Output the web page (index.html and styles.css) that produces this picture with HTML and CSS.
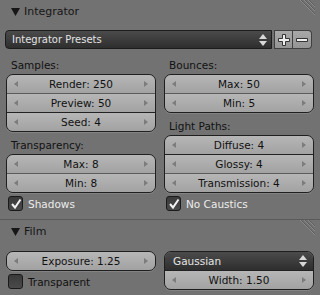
FILE: index.html
```html
<!DOCTYPE html>
<html lang="en">
<head>
    <meta charset="UTF-8">
    <title>Render Settings</title>
    <link rel="stylesheet" href="styles.css">
</head>
<body>
    <div class="panel">
        <div class="panel-head">
            <svg class="tri" width="9" height="8" viewBox="0 0 9 8"><polygon points="0,0 9,0 4.5,8" fill="#161616"/></svg>
            <span>Integrator</span>
            <svg class="grip" width="18" height="16" viewBox="0 0 18 16">
                <line x1="2" y1="0" x2="17" y2="15" stroke="#8a8a8a"/>
                <line x1="3" y1="0" x2="17" y2="14" stroke="#5e5e5e"/>
                <line x1="6" y1="0" x2="17" y2="11" stroke="#8a8a8a"/>
                <line x1="7" y1="0" x2="17" y2="10" stroke="#5e5e5e"/>
                <line x1="10" y1="0" x2="17" y2="7" stroke="#8a8a8a"/>
                <line x1="11" y1="0" x2="17" y2="6" stroke="#5e5e5e"/>
            </svg>
        </div>

        <div class="preset-row">
            <div class="menu">
                <span class="menu-text">Integrator Presets</span>
                <svg class="updown" width="8" height="12" viewBox="0 0 8 12"><polygon points="4,0 8,5 0,5" fill="#d8d8d8"/><polygon points="0,7 8,7 4,12" fill="#d8d8d8"/></svg>
            </div>
            <div class="tools">
                <div class="tool">
                    <svg width="12" height="12" viewBox="0 0 12 12"><path d="M4.5 0.5h3v4h4v3h-4v4h-3v-4h-4v-3h4z" fill="#eeeeee" stroke="#333"/></svg>
                </div>
                <div class="tool">
                    <svg width="12" height="12" viewBox="0 0 12 12"><path d="M0.5 4.5h11v3h-11z" fill="#eeeeee" stroke="#333"/></svg>
                </div>
            </div>
        </div>

        <div class="cols">
            <div class="col">
                <div class="lbl">Samples:</div>
                <div class="group">
                    <div class="num"><i class="la"></i><span>Render: 250</span><i class="ra"></i></div>
                    <div class="num"><i class="la"></i><span>Preview: 50</span><i class="ra"></i></div>
                    <div class="num dark-sep"><i class="la"></i><span>Seed: 4</span><i class="ra"></i></div>
                </div>
                <div class="lbl">Transparency:</div>
                <div class="group">
                    <div class="num"><i class="la"></i><span>Max: 8</span><i class="ra"></i></div>
                    <div class="num"><i class="la"></i><span>Min: 8</span><i class="ra"></i></div>
                </div>
                <div class="check on">
                    <span class="box"><svg width="12" height="12" viewBox="0 0 12 12"><polyline points="2,6 5,9.5 10.5,1.5" fill="none" stroke="#f2f2f2" stroke-width="2"/></svg></span>
                    <span>Shadows</span>
                </div>
            </div>
            <div class="col">
                <div class="lbl">Bounces:</div>
                <div class="group">
                    <div class="num"><i class="la"></i><span>Max: 50</span><i class="ra"></i></div>
                    <div class="num"><i class="la"></i><span>Min: 5</span><i class="ra"></i></div>
                </div>
                <div class="lbl">Light Paths:</div>
                <div class="group">
                    <div class="num"><i class="la"></i><span>Diffuse: 4</span><i class="ra"></i></div>
                    <div class="num dark-sep"><i class="la"></i><span>Glossy: 4</span><i class="ra"></i></div>
                    <div class="num"><i class="la"></i><span>Transmission: 4</span><i class="ra"></i></div>
                </div>
                <div class="check on">
                    <span class="box"><svg width="12" height="12" viewBox="0 0 12 12"><polyline points="2,6 5,9.5 10.5,1.5" fill="none" stroke="#f2f2f2" stroke-width="2"/></svg></span>
                    <span>No Caustics</span>
                </div>
            </div>
        </div>
    </div>

    <div class="panel film">
        <div class="panel-head">
            <svg class="tri" width="9" height="8" viewBox="0 0 9 8"><polygon points="0,0 9,0 4.5,8" fill="#161616"/></svg>
            <span>Film</span>
            <svg class="grip" width="18" height="16" viewBox="0 0 18 16">
                <line x1="2" y1="0" x2="17" y2="15" stroke="#8a8a8a"/>
                <line x1="3" y1="0" x2="17" y2="14" stroke="#5e5e5e"/>
                <line x1="6" y1="0" x2="17" y2="11" stroke="#8a8a8a"/>
                <line x1="7" y1="0" x2="17" y2="10" stroke="#5e5e5e"/>
                <line x1="10" y1="0" x2="17" y2="7" stroke="#8a8a8a"/>
                <line x1="11" y1="0" x2="17" y2="6" stroke="#5e5e5e"/>
            </svg>
        </div>
        <div class="cols film-cols">
            <div class="col">
                <div class="group">
                    <div class="num"><i class="la"></i><span>Exposure: 1.25</span><i class="ra"></i></div>
                </div>
                <div class="check">
                    <span class="box"></span>
                    <span>Transparent</span>
                </div>
            </div>
            <div class="col">
                <div class="group">
                    <div class="menu in-group">
                        <span class="menu-text">Gaussian</span>
                        <svg class="updown" width="8" height="12" viewBox="0 0 8 12"><polygon points="4,0 8,5 0,5" fill="#d8d8d8"/><polygon points="0,7 8,7 4,12" fill="#d8d8d8"/></svg>
                    </div>
                    <div class="num"><i class="la"></i><span>Width: 1.50</span><i class="ra"></i></div>
                </div>
            </div>
        </div>
    </div>
</body>
</html>
```

FILE: styles.css
```css
body{
    margin: 0;
    background: #727272;
    font: 10px "DejaVu Sans", sans-serif;
    color: #111;
    width: 320px;
    height: 295px;
    overflow: hidden;
}
.panel{
    padding: 0 6px 0 6px;
    height: 219px;
}
.panel.film{
    border-top: 1px solid #5a5a5a;
    height: 75px;
}
.panel-head{
    display: flex;
    align-items: center;
    height: 22px;
    font-size: 11px;
    color: #161616;
}
.tri{
    margin: 1px 4px 0 5px;
}
.grip{
    margin-left: auto;
    align-self: flex-start;
    margin-right: -2px;
}
.preset-row{
    display: flex;
    margin: 8px 2px 0 -1px;
    height: 19px;
}
.menu{
    flex: 1;
    display: flex;
    align-items: center;
    padding: 0 4px 0 6px;
    background: linear-gradient(#4b4b4b, #2e2e2e);
    border: 1px solid #1c1c1c;
    border-radius: 4px 0 0 4px;
    color: #e4e4e4;
    font-size: 10px;
}
.menu-text{
    flex: 1;
}
.tools{
    display: flex;
    margin-left: 2px;
}
.tool{
    width: 17px;
    display: flex;
    align-items: center;
    justify-content: center;
    background: linear-gradient(#a8a8a8, #949494);
    border: 1px solid #404040;
    border-left: none;
}
.tool:first-child{
    border-left: 1px solid #404040;
}
.tool:last-child{
    border-radius: 0 4px 4px 0;
    width: 18px;
}
.cols{
    display: flex;
    gap: 8px;
    margin-top: 8px;
}
.col{
    flex: 1;
    display: flex;
    flex-direction: column;
}
.col:first-child{
    flex: 0 0 150px;
}
.lbl{
    height: 17px;
    line-height: 17px;
    padding-left: 5px;
    margin-top: 5px;
    font-size: 10.5px;
}
.lbl:first-child{
    margin-top: 0;
}
.group{
    border: 1px solid #1f1f1f;
    border-radius: 7px;
    overflow: hidden;
    box-shadow: 0 1px 0 rgba(255, 255, 255, 0.12);
}
.num{
    height: 18px;
    display: flex;
    align-items: center;
    padding: 0 7px;
    background: linear-gradient(#b6b6b6, #a2a2a2);
    border-top: 1px solid #5c5c5c;
}
.num:first-child{
    border-top: none;
}
.num.dark-sep{
    border-top-color: #222;
}
.num span{
    flex: 1;
    text-align: center;
    font-size: 10.5px;
    color: #111;
}
.la, .ra{
    width: 0;
    height: 0;
    border-top: 3px solid transparent;
    border-bottom: 3px solid transparent;
}
.la{
    border-right: 4px solid #7c7c7c;
}
.ra{
    border-left: 4px solid #7c7c7c;
}
.check{
    display: flex;
    align-items: center;
    margin-top: 3px;
    padding-left: 2px;
    height: 15px;
    font-size: 10.5px;
    color: #111;
}
.check.on{
    color: #ececec;
}
.box{
    width: 13px;
    height: 13px;
    border: 1px solid #1a1a1a;
    border-radius: 3px;
    background: linear-gradient(#3a3a3a, #4a4a4a);
    margin-right: 5px;
    display: flex;
    align-items: center;
    justify-content: center;
}
.film-cols{
    margin-top: 9px;
}
.menu.in-group{
    height: 18px;
    border: none;
    border-radius: 0;
    padding: 0 6px 0 8px;
    flex: none;
    font-size: 10.5px;
}
.menu.in-group + .num{
    border-top-color: #222;
}
```
